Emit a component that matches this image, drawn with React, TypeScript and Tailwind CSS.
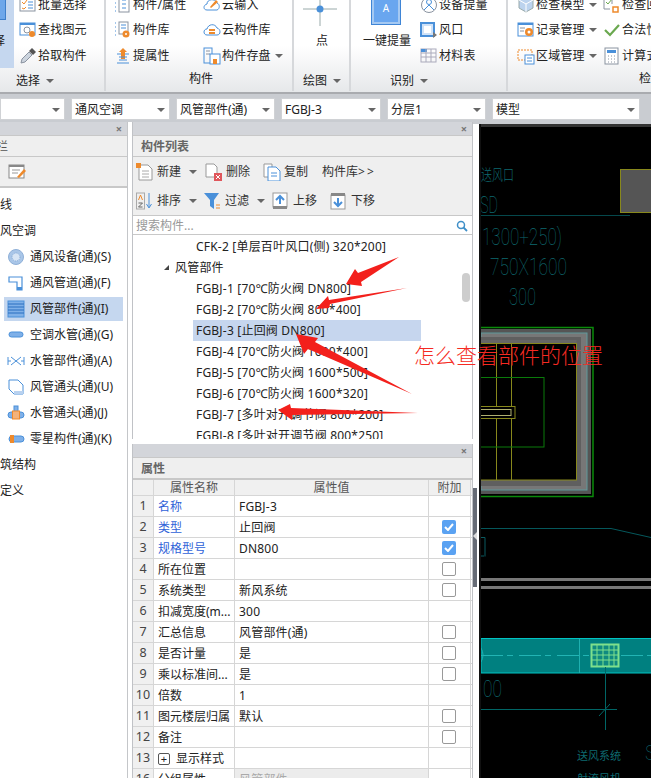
import React from "react";

const S = ({ w = 18, h = 18, children, className = "" }: { w?: number; h?: number; children: React.ReactNode; className?: string }) => (
  <svg width={w} height={h} viewBox={`0 0 ${w} ${h}`} className={`shrink-0 ${className}`} fill="none">{children}</svg>
);

const B = "#4a90d9", O = "#ee8a2c", G = "#8a93a0";

const icons: Record<string, React.ReactNode> = {
  batch: <S><rect x="1" y="2" width="15" height="13" stroke={G} /><path d="M3 6l2 2 3-4M3 12l2 1 2-2" stroke={O} /><path d="M9 6h5M9 9h5M9 12h5" stroke={B} /></S>,
  find: <S><rect x="1" y="2" width="15" height="12" fill="#fff" stroke={B} /><path d="M1 3h15" stroke={B} strokeWidth="2" /><circle cx="8" cy="9" r="3" stroke={G} /><circle cx="13" cy="13" r="3" fill={O} /></S>,
  pick: <S><path d="M2 16l1-4 7-7 3 3-7 7z" fill="#ccd4de" stroke={G} /><path d="M10 4l3-3 4 4-3 3z" fill="#555" /></S>,
  attr: <S><path d="M1 3h2M1 7h2M1 11h2M1 15h2" stroke={B} strokeDasharray="1 1" /><rect x="5" y="1" width="10" height="15" stroke={G} /><path d="M8 4h4M8 8h4M8 12h4" stroke={B} /></S>,
  lib: <S><path d="M1 2h2M1 6h2M1 10h2M1 14h2" stroke={B} strokeDasharray="1 1" /><rect x="5" y="1" width="9" height="12" stroke={G} /><path d="M7 4h5M7 7h5" stroke={B} /><circle cx="12" cy="13" r="3.5" fill={O} /><circle cx="12" cy="13" r="1" fill="#fff" /></S>,
  up: <S><path d="M3 7h12M3 16h12" stroke={B} /><path d="M9 1l4 4h-2v7H7V5H5z" fill={O} /><path d="M5 10h8M5 13h8" stroke={B} /></S>,
  cin: <S><path d="M4 14c-4 0-4-5 0-6 0-5 8-6 10-1 3 1 3 6 0 7z" stroke={B} /><path d="M7 11l6-7 2 2-7 6z" fill={O} /></S>,
  cloud: <S><path d="M4 14c-4 0-4-6 0-6 1-5 8-6 10-1 4 1 4 7 0 7z" stroke={B} /><path d="M6 9h6M6 12h6" stroke={O} strokeWidth="2" /></S>,
  save: <S><rect x="1" y="1" width="8" height="15" stroke={B} /><path d="M3 4h4M3 7h4" stroke={G} /><rect x="7" y="7" width="10" height="10" fill="#fff" stroke={B} /><rect x="10" y="12" width="4" height="5" fill={O} /></S>,
  dev: <S><circle cx="9" cy="9" r="7.5" stroke={G} /><circle cx="9" cy="6" r="2.5" stroke={B} /><path d="M4 14l5-5 5 5" stroke={B} /></S>,
  vent: <S><rect x="1" y="2" width="13" height="13" fill="#cfe2f8" stroke={B} strokeWidth="2" /><rect x="4" y="5" width="7" height="7" fill="#fff" /><path d="M13 11l4 3-4 3z" fill="#777" /></S>,
  mat: <S><rect x="1" y="2" width="15" height="13" stroke="#aab" /><path d="M1 2h6v3H1z" fill={B} /><path d="M1 6h15M1 10h15M6 2v13M11 2v13" stroke="#aab" /></S>,
  chk: <S><path d="M9 1l7 3v8l-7 4-7-4V4z" fill="#bcd3ee" stroke="#9aa" /><path d="M9 8v8M2 4l7 4 7-4" stroke="#fff" /></S>,
  chk2: <S><path d="M1 2h8v6M1 2v11h6" stroke={G} /><path d="M3 6l2 2 4-5" stroke="#6aa84f" /><rect x="10" y="11" width="5" height="5" stroke={O} strokeWidth="1.5" /></S>,
  rec: <S><rect x="1" y="2" width="15" height="13" fill="#fff" stroke={B} /><path d="M1 3h15" stroke={B} strokeWidth="2" /><path d="M3 7h5M3 10h4" stroke={G} /><circle cx="12" cy="11" r="4" fill={O} /><circle cx="12" cy="11" r="1.5" fill="#fff" /></S>,
  ok: <S><path d="M2 9l5 5 9-10" stroke="#6aa84f" strokeWidth="2.2" /></S>,
  area: <S><rect x="1" y="3" width="14" height="10" stroke={O} strokeDasharray="2 1" /><rect x="8" y="8" width="9" height="9" fill="#fff" stroke={B} /><path d="M10 11h5M10 14h5" stroke={B} /></S>,
  calc: <S><rect x="2" y="1" width="13" height="16" stroke={G} fill="#fff" /><rect x="4" y="3" width="9" height="3" fill={B} /><path d="M5 9h1M8 9h1M11 9h1M5 12h1M8 12h1M11 12h1M5 15h1M8 15h1M11 15h1" stroke={G} /></S>,
  newdoc: <S><path d="M3 2h9l4 4v11H3z" fill="#fff" stroke="#999" /><path d="M6 8h7M6 11h7M6 14h7" stroke="#aaa" /><rect x="0" y="0" width="5" height="5" fill={O} /></S>,
  del: <S><path d="M1 1h8l3 3v10H1z" fill="#fff" stroke="#999" /><rect x="9" y="10" width="8" height="8" fill="#e0565b" /><path d="M11 12l4 4M15 12l-4 4" stroke="#fff" /></S>,
  copy: <S><path d="M1 1h8v13H1z" fill="#fff" stroke="#999" /><path d="M5 4h8l4 4v10H5z" fill="#fff" stroke={B} /><path d="M8 10h6M8 13h6" stroke={B} /></S>,
  sort: <S><rect x="0.5" y="1" width="8" height="16" stroke="#aaa" /><path d="M2.5 8l2-5 2 5" stroke={O} /><path d="M2.5 11h4l-4 4h4" stroke="#666" /><path d="M13 1v14M10.5 12l2.5 4 2.5-4" stroke={B} /></S>,
  filter: <S><path d="M0 1h15l-5 7v9l-4-3V8z" fill={B} /><path d="M12 13h4M12 16h4" stroke={O} /></S>,
  moveup: <S><rect x="1" y="1" width="14" height="14" fill="#fff" stroke="#999" /><rect x="1" y="14" width="14" height="3" fill="#888" /><path d="M8 12V4M4 8l4-4 4 4" stroke={B} strokeWidth="2" /></S>,
  movedown: <S><rect x="1" y="3" width="14" height="14" fill="#fff" stroke="#999" /><rect x="1" y="1" width="14" height="3" fill="#888" /><path d="M8 6v8M4 10l4 4 4-4" stroke={B} strokeWidth="2" /></S>,
  edit: <S w={20} h={18}><rect x="1" y="2" width="15" height="13" fill="#fff" stroke="#888" /><path d="M1 3h15" stroke="#888" strokeWidth="2" /><path d="M4 7h8M4 10h6" stroke="#999" /><path d="M9 14l7-8 2 2-7 7z" fill={O} /></S>,
  equip: <S><circle cx="9" cy="9" r="7.5" fill="#a9c6e8" stroke="#8fb0d8" /><circle cx="9" cy="9" r="4" fill="#d7e5f5" stroke="#7fa6d6" strokeDasharray="1 1" /></S>,
  duct: <S><path d="M2 3h13v13h-5V8H2z" fill="#fff" stroke={B} strokeWidth="1.2" /><rect x="10" y="13" width="5" height="3" fill={B} /></S>,
  part: <S><rect x="1" y="1" width="16" height="16" fill="#7fb0e8" stroke={B} /><path d="M1 4h16M1 7h16M1 10h16M1 13h16" stroke="#2a6fc0" /></S>,
  pipe: <S><rect x="2" y="6" width="14" height="5" rx="2.5" fill="#7fb0e8" stroke={B} /></S>,
  wpart: <S><path d="M1 5v8M17 5v8M1 9h3M14 9h3" stroke={B} /><path d="M4 5l10 8M14 5L4 13" stroke={B} /></S>,
  elbow: <S><path d="M2 2h9l5 5v9H7l-5-5z" fill="#fff" stroke={B} /><path d="M7 16h9v-3H7z" fill="#b9d2f0" /></S>,
  wjoint: <S><rect x="1" y="8" width="16" height="6" rx="3" fill="#7fb0e8" stroke={B} /><rect x="7" y="2" width="4" height="6" fill="#7fb0e8" stroke={B} /><rect x="5.5" y="7" width="7" height="8" fill="#f3b27a" stroke={O} /></S>,
  misc: <S><rect x="2" y="6" width="15" height="6" rx="3" fill="#7fb0e8" stroke={B} /><rect x="3" y="5" width="4" height="8" fill={O} /></S>,
};

const Caret = ({ className = "" }: { className?: string }) => <span className={`inline-block w-0 h-0 border-x-[4px] border-x-transparent border-t-[4px] border-t-[#666] ${className}`} />;

const RItem = ({ icon, label, caret }: { icon: string; label: string; caret?: boolean }) => (
  <div className="h-[25.5px] flex items-center gap-[1px] whitespace-nowrap">
    {icons[icon]}
    <span className="text-[12px] leading-none tracking-[0.2px]">{label}</span>
    {caret && <Caret className="ml-[3px]" />}
  </div>
);

const Col = ({ items, className = "" }: { items: [string, string, boolean?][]; className?: string }) => (
  <div className={`flex flex-col ${className}`}>
    {items.map(([i, l, c]) => <RItem key={l} icon={i} label={l} caret={c} />)}
  </div>
);

const SecLabel = ({ text, caret, className = "" }: { text: string; caret?: boolean; className?: string }) => (
  <div className={`absolute h-[18px] flex items-center gap-[6px] text-[12px] leading-none whitespace-nowrap ${className}`}>
    {text}{caret && <Caret />}
  </div>
);

const Section = ({ w, children }: { w: number; children: React.ReactNode }) => (
  <div style={{ width: w }} className="relative shrink-0 h-[91px] overflow-hidden border-r-2 border-r-[#d6d8db]">{children}</div>
);

const Ribbon = () => (
  <div className="h-[94px] flex border-b-2 border-b-[#a9abaf] bg-gradient-to-b from-white from-50% to-[#e6e8ea] text-[#222] overflow-hidden">
    <Section w={106}>
      <div className="absolute left-0 top-0 w-[14px] h-[68px] bg-[#c5d7ef]">
        <div className="absolute -left-[16px] -top-[6px] w-[22px] h-[26px] bg-[#6ea7ea] border border-[#3f7fca]" />
        <span className="absolute -left-[7px] top-[32px] text-[12px] leading-[18px]">择</span>
      </div>
      <Col className="absolute left-[19px] -top-[8px]" items={[["batch", "批量选择"], ["find", "查找图元"], ["pick", "拾取构件"]]} />
      <SecLabel text="选择" caret className="left-[16px] top-[72px]" />
    </Section>
    <Section w={188}>
      <Col className="absolute left-[8px] -top-[8px]" items={[["attr", "构件/属性"], ["lib", "构件库"], ["up", "提属性"]]} />
      <Col className="absolute left-[97px] -top-[8px]" items={[["cin", "云输入"], ["cloud", "云构件库"], ["save", "构件存盘", true]]} />
      <SecLabel text="构件" className="left-[83px] top-[70px]" />
    </Section>
    <Section w={57}>
      <svg width="34" height="34" viewBox="0 0 34 34" className="absolute left-[9px] -top-[8px]" fill="none">
        <path d="M17 0v34M0 17h34" stroke="#9aa" /><circle cx="17" cy="17" r="3.5" fill={B} />
      </svg>
      <span className="absolute left-[22px] top-[32px] text-[12px] leading-[18px]">点</span>
      <SecLabel text="绘图" caret className="left-[9px] top-[72px]" />
    </Section>
    <Section w={157}>
      <div className="absolute left-[21px] -top-[8px] w-[28px] h-[32px] bg-[#69a6ef] border-2 border-[#a5c9f2] outline outline-1 outline-[#3f85d6] flex items-center justify-center text-white text-[10px]">A</div>
      <span className="absolute left-[12px] top-[32px] text-[12px] leading-[18px] whitespace-nowrap">一键提量</span>
      <Col className="absolute left-[69px] -top-[8px]" items={[["dev", "设备提量"], ["vent", "风口"], ["mat", "材料表"]]} />
      <SecLabel text="识别" caret className="left-[39px] top-[72px]" />
    </Section>
    <div className="relative flex-1 h-[91px] overflow-hidden">
      <Col className="absolute left-[9px] -top-[8px]" items={[["chk", "检查模型", true], ["rec", "记录管理", true], ["area", "区域管理", true]]} />
      <Col className="absolute left-[95px] -top-[8px]" items={[["chk2", "检查回路"], ["ok", "合法性"], ["calc", "计算式"]]} />
      <SecLabel text="检查" className="left-[131px] top-[70px]" />
    </div>
  </div>
);

const Dd = ({ w, text }: { w: number; text?: string }) => (
  <div style={{ width: w }} className="h-[22px] shrink-0 bg-white border border-[#d0d2d5] flex items-center justify-between pl-[3px] pr-[4px] pt-[1px] text-[12px] leading-none text-[#222]">
    <span>{text}</span><Caret />
  </div>
);

const DropBar = () => (
  <div className="h-[28px] bg-[#c9ccd1] flex items-start pt-[4px] gap-[6px] overflow-hidden">
    <Dd w={65} /><Dd w={99} text="通风空调" /><Dd w={99} text="风管部件(通)" /><Dd w={100} text="FGBJ-3" /><Dd w={99} text="分层1" /><Dd w={148} text="模型" />
  </div>
);

const PanelTop = () => (
  <div className="h-[13px] bg-[#d3d5da] flex items-center justify-end pr-[5px] text-[11px] leading-none font-bold text-[#777] shrink-0">×</div>
);

const tree = [["equip", "通风设备(通)(S)"], ["duct", "通风管道(通)(F)"], ["part", "风管部件(通)(I)"], ["pipe", "空调水管(通)(G)"], ["wpart", "水管部件(通)(A)"], ["elbow", "风管通头(通)(U)"], ["wjoint", "水管通头(通)(J)"], ["misc", "零星构件(通)(K)"]];

const LeftPanel = () => (
  <div className="w-[128px] shrink-0 flex flex-col border-r border-r-[#c4c6c9] bg-white h-full overflow-hidden">
    <PanelTop />
    <div className="h-[22px] bg-[#efefef] border-y border-y-[#c8c8c8] flex items-center text-[12px] leading-none text-[#555] overflow-hidden pt-[1px]"><span className="-ml-[28px] whitespace-nowrap">导航栏</span></div>
    <div className="h-[31px] bg-[#efefef] border-b-2 border-b-[#c8c8c8] flex items-center pl-[8px]">{icons.edit}</div>
    <div className="flex flex-col text-[12px] leading-none text-[#222] pt-[4px]">
      <div className="h-[26px] flex items-center -ml-[12px]">轴线</div>
      <div className="h-[26px] flex items-center -ml-[12px]">通风空调</div>
      {tree.map(([i, l], n) => (
        <div key={l} className="h-[26px] flex items-center pl-[7px]">
          <div className={`flex items-center gap-[5px] h-[24px] w-[119px] -ml-[3px] pl-[3px] ${n === 2 ? "bg-[#c5d7ef]" : ""}`}>
            {icons[i]}<span className="whitespace-nowrap">{l}</span>
          </div>
        </div>
      ))}
      <div className="h-[26px] flex items-center -ml-[12px]">建筑结构</div>
      <div className="h-[26px] flex items-center -ml-[12px]">自定义</div>
    </div>
  </div>
);

const Tb = ({ icon, label, caret, className = "" }: { icon: string; label: string; caret?: boolean; className?: string }) => (
  <div className={`flex items-center gap-[3px] whitespace-nowrap ${className}`}>
    {icons[icon]}<span>{label}</span>{caret && <Caret className="ml-[5px]" />}
  </div>
);

const listRows = ["FGBJ-1 [70℃防火阀 DN800]", "FGBJ-2 [70℃防火阀 800*400]", "FGBJ-3 [止回阀 DN800]", "FGBJ-4 [70℃防火阀 1600*400]", "FGBJ-5 [70℃防火阀 1600*500]", "FGBJ-6 [70℃防火阀 1600*320]", "FGBJ-7 [多叶对开调节阀 800*200]", "FGBJ-8 [多叶对开调节阀 800*250]"];

const ListPanel = () => (
  <div className="h-[317px] shrink-0 flex flex-col border-x border-x-[#c0c2c6] bg-white">
    <PanelTop />
    <div className="h-[22px] bg-[#efefef] border-y border-y-[#c8c8c8] flex items-center pl-[8px] pt-[1px] text-[12px] leading-none font-bold text-[#666] shrink-0">构件列表</div>
    <div className="h-[59px] bg-[#efefef] border-b border-b-[#c8c8c8] text-[12px] leading-none text-[#333] flex flex-col shrink-0">
      <div className="h-[30px] flex items-center pl-[3px]">
        <Tb icon="newdoc" label="新建" caret /><Tb icon="del" label="删除" className="ml-[8px]" /><Tb icon="copy" label="复制" className="ml-[13px]" /><span className="ml-[14px]">构件库<span className="tracking-[2px]">&gt;&gt;</span></span>
      </div>
      <div className="h-[29px] flex items-center pl-[3px] pt-[1px]">
        <Tb icon="sort" label="排序" caret /><Tb icon="filter" label="过滤" caret className="ml-[7px]" /><Tb icon="moveup" label="上移" className="ml-[7px]" /><Tb icon="movedown" label="下移" className="ml-[13px]" />
      </div>
    </div>
    <div className="h-[19px] border-b border-b-[#c8c8c8] flex items-center justify-between pl-[3px] pr-[4px] pt-[2px] text-[12px] leading-none text-[#999] shrink-0">
      <span>搜索构件...</span>
      <svg width="12" height="12" viewBox="0 0 12 12" fill="none"><circle cx="5" cy="5" r="3.5" stroke="#3f8fc8" strokeWidth="1.5" /><path d="M7.5 7.5L11 11" stroke="#3f8fc8" strokeWidth="1.8" /></svg>
    </div>
    <div className="relative flex-1 overflow-hidden text-[12px] leading-none text-[#222] tracking-[0.2px] pt-[1px]">
      <div className="h-[21px] flex items-center pl-[63px] whitespace-nowrap">CFK-2 [单层百叶风口(侧) 320*200]</div>
      <div className="h-[21px] flex items-center pl-[31px] gap-[6px]">
        <span className="w-0 h-0 border-l-[5px] border-l-transparent border-b-[5px] border-b-[#444]" />风管部件
      </div>
      {listRows.map((r, i) => (
        <div key={r} className={`h-[21px] flex items-center ml-[60px] pl-[3px] whitespace-nowrap w-[228px] ${i === 2 ? "bg-[#c6d6ee]" : ""}`}>{r}</div>
      ))}
      <div className="absolute right-[2px] top-[38px] w-[8px] h-[29px] rounded-full bg-[#cdcdcd]" />
    </div>
  </div>
);

type Row = { n: number; name?: string; blue?: boolean; val?: string; chk?: "on" | "off"; exp?: boolean; gray?: boolean };
const props: Row[] = [
  { n: 1, name: "名称", blue: true, val: "FGBJ-3" },
  { n: 2, name: "类型", blue: true, val: "止回阀", chk: "on" },
  { n: 3, name: "规格型号", blue: true, val: "DN800", chk: "on" },
  { n: 4, name: "所在位置", chk: "off" },
  { n: 5, name: "系统类型", val: "新风系统", chk: "off" },
  { n: 6, name: "扣减宽度(m...", val: "300" },
  { n: 7, name: "汇总信息", val: "风管部件(通)", chk: "off" },
  { n: 8, name: "是否计量", val: "是", chk: "off" },
  { n: 9, name: "乘以标准间...", val: "是", chk: "off" },
  { n: 10, name: "倍数", val: "1" },
  { n: 11, name: "图元楼层归属", val: "默认", chk: "off" },
  { n: 12, name: "备注", chk: "off" },
  { n: 13, name: "显示样式", exp: true },
  { n: 16, name: "分组属性", val: "风管部件", gray: true },
];

const Cell = ({ w, children, className = "" }: { w: number; children?: React.ReactNode; className?: string }) => (
  <div style={{ width: w }} className={`h-full shrink-0 border-r border-r-[#d6d6d6] flex items-center overflow-hidden whitespace-nowrap ${className}`}>{children}</div>
);

const PropPanel = () => (
  <div className="flex-1 flex flex-col border-x border-x-[#c0c2c6] bg-white overflow-hidden">
    <PanelTop />
    <div className="h-[22px] bg-[#efefef] border-y border-y-[#c8c8c8] flex items-center pl-[8px] pt-[1px] text-[12px] leading-none font-bold text-[#666] shrink-0">属性</div>
    <div className="text-[12px] leading-none text-[#222]">
      <div className="h-[17px] flex bg-[#f0f0f0] border-b border-b-[#d6d6d6] text-[#555] border-t border-t-[#c8c8c8]">
        <Cell w={21} /><Cell w={81} className="justify-center">属性名称</Cell><Cell w={194} className="justify-center">属性值</Cell><Cell w={42} className="justify-center">附加</Cell>
      </div>
      {props.map((p) => (
        <div key={p.n} className="h-[21px] flex border-b border-b-[#d6d6d6]">
          <Cell w={21} className="justify-center bg-[#f0f0f0] text-[#444] text-[12.5px] pt-[1px]">{p.n}</Cell>
          <Cell w={81} className={`pl-[4px] pt-[1px] ${p.blue ? "text-[#2f62d8]" : ""}`}>
            {p.exp && (<span className="w-[12px] h-[12px] mr-[6px] border border-[#555] rounded-[2px] flex items-center justify-center text-[11px] leading-none">+</span>)}
            {p.name}
          </Cell>
          <Cell w={194} className={`pl-[4px] pt-[1px] tracking-[0.2px] ${p.gray ? "bg-[#ececec] text-[#aaa]" : ""}`}>{p.val}</Cell>
          <Cell w={42} className="justify-center pr-[1px]">
            {p.chk === "on" && (
              <span className="w-[14px] h-[14px] rounded-[2px] bg-[#5aa2f2] flex items-center justify-center">
                <svg width="10" height="8" viewBox="0 0 10 8" fill="none"><path d="M1 4l3 3 5-6" stroke="#fff" strokeWidth="2" /></svg>
              </span>
            )}
            {p.chk === "off" && <span className="w-[14px] h-[14px] rounded-[2px] border border-[#999] bg-white" />}
          </Cell>
        </div>
      ))}
    </div>
  </div>
);

const T = "#0e6a70";
const thin = { fontFamily: "Roboto", fontWeight: 100 };
const Canvas = () => (
  <svg viewBox="479 122 172 656" width="172" height="656" className="block bg-black" fill="none">
    <text x="481" y="180" fontSize="15" fill={T} textLength="33" lengthAdjust="spacingAndGlyphs" fontFamily="Noto Sans CJK SC" fontWeight="300">送风口</text>
    <text x="480" y="213" fontSize="24" fill={T} textLength="18" lengthAdjust="spacingAndGlyphs" style={thin}>SD</text>
    <path d="M481 215.5h149" stroke="#05484c" />
    <rect x="620.5" y="169.5" width="40" height="43" fill="#555" stroke="#88881c" />
    <text x="482" y="245" fontSize="24" fill={T} textLength="80" lengthAdjust="spacingAndGlyphs" style={thin}>1300+250)</text>
    <text x="490" y="275" fontSize="24" fill={T} textLength="77" lengthAdjust="spacingAndGlyphs" style={thin}>750X1600</text>
    <text x="509" y="305" fontSize="24" fill={T} textLength="27" lengthAdjust="spacingAndGlyphs" style={thin}>300</text>

    <path d="M481 327.5h112v169H481" stroke="#0a8a0a" strokeWidth="1.5" />
    <rect x="481" y="329" width="110" height="165" fill="#555" />
    <rect x="481" y="333" width="106" height="157" fill="#777" stroke="#5e9a9c" />
    <rect x="481" y="337" width="100" height="149" fill="#5f5f5f" />
    <rect x="481" y="340" width="95.5" height="140.5" fill="#666" />
    <rect x="478" y="343.5" width="98.5" height="136.5" fill="#000" stroke="#88881c" />
    <path d="M496.5 343v137M511.5 343v137" stroke="#88881c" />
    <rect x="478" y="377.5" width="66" height="69.5" stroke="#0a7a0a" />
    <rect x="478" y="406.5" width="37" height="12" fill="#000" stroke="#88881c" />
    <rect x="478" y="409.5" width="33" height="6" stroke="#b0b070" />

    <path d="M481 528.5h130l40 9" stroke="#05585c" />
    <path d="M481 537.5h4v19M481 556h3" stroke="#0a5a60" />
    <path d="M481 578h170v3H481zM481 586h170v3H481z" fill="#777" />
    <rect x="481" y="638.5" width="171" height="34.5" fill="#008080" stroke="#00c4c4" />
    <path d="M481 655.5h110M621 655.5h30" stroke="#22b4b4" strokeDasharray="22 4 6 6" />
    <path d="M579.5 639v34M481 648q4 7 0 14" stroke="#1fb0b0" />
    <rect x="591.5" y="644.5" width="27" height="22" fill="#0f8a80" stroke="#7fe08c" strokeWidth="2" />
    <path d="M591 650h28M591 655h28M591 660h28M597 644v23M603 644v23M609 644v23M614 644v23" stroke="#7fe08c" />
    <text x="483" y="697" fontSize="24" fill={T} textLength="19" lengthAdjust="spacingAndGlyphs" style={thin}>00</text>
    <path d="M481 709.5h136M605.5 667v63M599 716l11-12" stroke="#066" />
    <text x="577" y="760" fontSize="11" fill={T} textLength="44" lengthAdjust="spacingAndGlyphs" fontFamily="Noto Sans CJK SC">送风系统</text>
    <text x="577" y="783" fontSize="11" fill={T} textLength="44" lengthAdjust="spacingAndGlyphs" fontFamily="Noto Sans CJK SC">射流风机</text>
    <text x="645" y="760" fontSize="20" fill={T} style={thin}>S</text>
    <rect x="479" y="122" width="172" height="2" fill="#c9ccd1" />
    <rect x="479" y="124" width="172" height="3" fill="#333" />
    <rect x="479" y="124" width="2" height="654" fill="#111" />
  </svg>
);

const Arrows = () => (
  <svg viewBox="0 0 651 778" width="651" height="778" className="absolute inset-0 pointer-events-none">
    <g fill="#f3201c">
      <polygon points="346,284 355,269 358,273 399,257 361,282 362,286" />
      <polygon points="316,309 328,296 329,300 407,288 330,304 329,308" />
      <polygon points="296,334 318,338 315,342 412,394 308,349 304,354" />
      <polygon points="278,410 290,404 291,408 418,413 292,415 292,420" />
    </g>
  </svg>
);

export default function App() {
  return (
    <div className="relative w-[651px] h-[778px] overflow-hidden bg-white font-['Noto_Sans','Noto_Sans_CJK_SC',sans-serif] text-[12px]">
      <Ribbon />
      <DropBar />
      <div className="h-[656px] flex">
        <LeftPanel />
        <div className="w-[4px] shrink-0 bg-white" />
        <div className="w-[341px] shrink-0 flex flex-col h-full">
          <ListPanel />
          <div className="h-[5px] bg-white shrink-0" />
          <PropPanel />
        </div>
        <div className="w-[6px] shrink-0 bg-white flex flex-col">
          <div className="h-[2px] bg-[#c9ccd1] shrink-0" />
          <div className="h-[364px] shrink-0" />
          <div className="relative h-[99px] w-[4px] bg-[#666b75]">
            <span className="absolute left-0 top-[44px] w-0 h-0 border-y-[4px] border-y-transparent border-r-[4px] border-r-[#ddd]" />
          </div>
        </div>
        <Canvas />
      </div>
      <Arrows />
      <div className="absolute left-[414px] top-[341px] text-[21px] leading-[26px] text-[#f52a22] font-light whitespace-nowrap font-['Noto_Sans_CJK_SC',sans-serif]">怎么查看部件的位置</div>
    </div>
  );
}
